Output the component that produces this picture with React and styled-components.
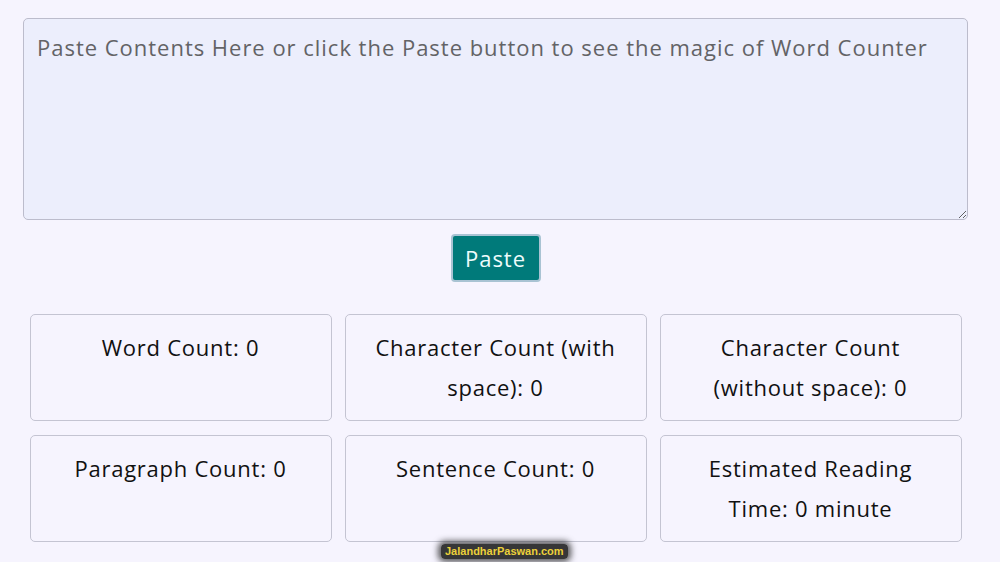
import React from "react";
import styled, { createGlobalStyle } from "styled-components";

const Global = createGlobalStyle`
  html, body { margin: 0; padding: 0; background: #f6f4fe; }
  body { font-family: "Open Sans", "Noto Sans", sans-serif; }
  * { box-sizing: border-box; }
`;

const Page = styled.div`
  position: relative;
  width: 1000px;
  height: 562px;
  padding: 18px 32px 0 23px;
  display: flex;
  flex-direction: column;
  align-items: center;
`;

const TextArea = styled.textarea`
  width: 945px;
  height: 202px;
  margin: 0;
  padding: 13px 13px;
  background: #eceefc;
  border: 1px solid #bcbccc;
  border-radius: 5px;
  font-family: inherit;
  font-size: 22px;
  letter-spacing: 0.98px;
  line-height: 30px;
  color: #333;
  outline: none;
  &::placeholder { color: #636366; }
`;

const PasteButton = styled.button`
  margin-top: 14px;
  width: 90px;
  height: 48px;
  background: #007a7a;
  color: #eefcfc;
  border: 2px solid #a9c3d3;
  border-radius: 4px;
  font-family: inherit;
  font-size: 22px;
  letter-spacing: 1px;
  padding: 0;
  cursor: pointer;
`;

const Grid = styled.div`
  margin-top: 32px;
  width: 932px;
  display: grid;
  grid-template-columns: repeat(3, 302px);
  column-gap: 13px;
  row-gap: 14px;
`;

const Card = styled.div`
  height: 107px;
  border: 1px solid #c4c4d2;
  border-radius: 5px;
  padding: 12px 16px;
  text-align: center;
  font-size: 22px;
  letter-spacing: 0.75px;
  line-height: 40px;
  color: #111;
`;

const Watermark = styled.div`
  position: absolute;
  left: 441px;
  top: 544px;
  padding: 1px 4px;
  background: rgba(20, 20, 20, 0.85);
  box-shadow: 0 0 6px 3px rgba(20, 20, 20, 0.7);
  border-radius: 4px;
  color: #ecd03a;
  font-family: "Liberation Sans", sans-serif;
  font-weight: bold;
  font-size: 11px;
  line-height: 13px;
`;

const stats = [
  "Word Count: 0",
  "Character Count (with space): 0",
  "Character Count (without space): 0",
  "Paragraph Count: 0",
  "Sentence Count: 0",
  "Estimated Reading Time: 0 minute",
];

export default function App() {
  return (
    <>
      <Global />
      <Page>
        <TextArea placeholder="Paste Contents Here or click the Paste button to see the magic of Word Counter" />
        <PasteButton>Paste</PasteButton>
        <Grid>
          {stats.map((s) => (
            <Card key={s}>{s}</Card>
          ))}
        </Grid>
        <Watermark>JalandharPaswan.com</Watermark>
      </Page>
    </>
  );
}
